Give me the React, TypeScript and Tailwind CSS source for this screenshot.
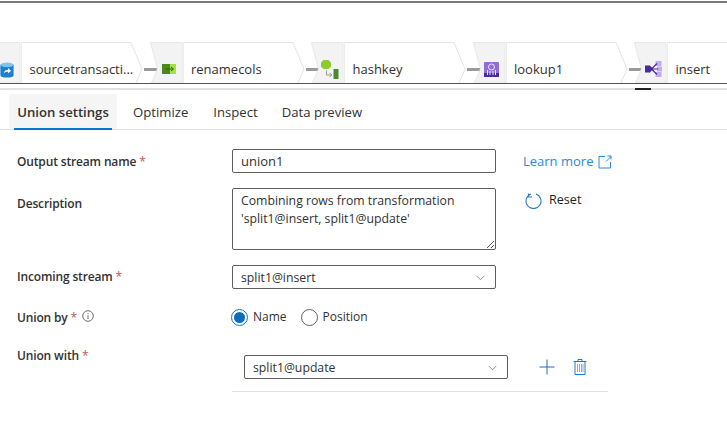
import React from 'react';
import { ChevronDown } from 'lucide-react';

const SourceIcon = () => (
  <svg width="14" height="16" viewBox="0 0 14 17">
    <path d="M0 3v11c0 1.6 3 2.6 7 2.6s7-1 7-2.6V3z" fill="#1c7fd0" />
    <ellipse cx="7" cy="3" rx="7" ry="2.4" fill="#7fc6ee" />
    <path d="M3.5 12.5c.3-3 2-4.3 4.7-4.3V6.4l3 2.9-3 2.9v-1.9c-1.9 0-3.4.4-4.7 1.7z" fill="#fff" />
  </svg>
);

const RenameIcon = () => (
  <svg width="14" height="10" viewBox="0 0 14 10">
    <rect width="8" height="10" fill="#4a8a1c" />
    <rect x="8" width="6" height="10" fill="#a4e04a" />
    <path d="M4 5h7M9 3l2.5 2L9 7" stroke="#2f5f10" strokeWidth="1" fill="none" />
  </svg>
);

const HashIcon = () => (
  <svg width="18" height="19" viewBox="0 0 18 19">
    <path d="M2.500 0h5l2.500 2.500v4L7.500 9h-5L0 6.500v-4z" fill="#8ccc2e" />
    <path d="M5.500 10.500v4.500h5M8.500 13l2.500 2-2.500 2" stroke="#9a9a9a" strokeWidth="1" fill="none" />
    <rect x="12.500" y="9" width="5" height="10" fill="#4a8a2c" />
  </svg>
);

const LookupIcon = () => (
  <svg width="15" height="15" viewBox="0 0 15 15">
    <rect width="15" height="15" rx="1" fill="#8f6bdc" />
    <rect y="11" width="15" height="4" fill="#4b2a9a" />
    <circle cx="7.500" cy="5" r="3" fill="none" stroke="#efe8ff" strokeWidth="1" />
    <path d="M3.500 13V8M6 13V9M9 13V9M11.500 13V8" stroke="#efe8ff" strokeWidth="1" />
  </svg>
);

const SplitIcon = () => (
  <svg width="17" height="16" viewBox="0 0 17 16">
    <rect x="10.500" y="0" width="6" height="5" fill="#c5a8f2" />
    <rect x="12" y="5.500" width="5" height="5" fill="#c5a8f2" />
    <rect x="10.500" y="11" width="6" height="5" fill="#c5a8f2" />
    <path d="M0 4.500h5L8 8l-3 3.500H0z" fill="#4b2a9a" />
    <path d="M7 7.500l5-5M7 8h6M7 8.500l5 5" stroke="#4b2a9a" strokeWidth="1.200" fill="none" />
  </svg>
);

const nodes = [
  { name: 'sourcetransacti...', icon: <SourceIcon />, cls: 'left-[12px] top-[20px]' },
  { name: 'renamecols', icon: <RenameIcon />, cls: 'left-[12px] top-[22px]' },
  { name: 'hashkey', icon: <HashIcon />, cls: 'left-[10px] top-[18px]' },
  { name: 'lookup1', icon: <LookupIcon />, cls: 'left-[11px] top-[20px]' },
  { name: 'insert', icon: <SplitIcon />, cls: 'left-[11px] top-[19px]' },
];

function PipelineNode({ name, icon, cls }: { name: string; icon: React.ReactNode; cls: string }) {
  return (
    <div className="relative h-[41px] w-[161.5px] shrink-0">
      <svg className="absolute left-0 top-0 overflow-visible" width="170" height="41">
        <path d="M0.500 0.500L7.500 27L1.500 41H32V0.500z" fill="#f3f3f3" stroke="#e8e8e8" />
        <path d="M33.500 0.500H143L154 27L148 41" fill="#fff" stroke="#e4e4e4" />
        <path d="M33.500 0.500V41" stroke="#ececec" fill="none" />
        <rect x="156" y="26" width="13" height="3" fill="#9a9a9a" />
      </svg>
      <div className={`absolute ${cls}`}>{icon}</div>
      <span className="absolute left-[41.500px] top-[18px] text-[13px] leading-[18px] text-[#323130]">{name}</span>
    </div>
  );
}

const Req = () => <span className="font-normal text-[#c4544f]"> *</span>;

export default function App() {
  return (
    <div className="h-[421px] w-[727px] overflow-hidden bg-white font-['Open_Sans',sans-serif] text-[12.25px] text-[#323130]">
      <div className="mt-px h-[2px] bg-[#7a7a7a]" />
      {/* Pipeline */}
      <div className="mt-[39px] h-[42px] overflow-hidden border-b border-[#555555]">
        <div className="-ml-[12px] flex">
          {nodes.map((n) => (
            <PipelineNode key={n.name} {...n} />
          ))}
        </div>
      </div>
      {/* scrollbar */}
      <div className="relative mt-[4px] h-[2px] bg-[#e1e1e1]">
        <div className="absolute left-[635px] top-0 h-[2px] w-[16px] bg-[#222222]" />
      </div>
      {/* Tabs */}
      <div className="mt-[4px] flex h-[36px] border-b border-[#e1e1e1] pl-[9px] text-[13.150px]">
        <div className="relative flex h-[35px] w-[108px] justify-center bg-[#f5f5f5] pt-[9px] font-semibold leading-[18px]">
          Union settings
          <div className="absolute bottom-[-1px] left-[5px] h-[2px] w-[98px] bg-[#0078d4]" />
        </div>
        <div className="ml-[16px] pt-[9px] leading-[18px]">Optimize</div>
        <div className="ml-[25px] pt-[9px] leading-[18px]">Inspect</div>
        <div className="ml-[24px] pt-[9px] leading-[18px]">Data preview</div>
      </div>
      {/* Form */}
      <div className="pl-[17px]">
        <div className="mt-[19px] flex">
          <label className="w-[215px] pt-[4px] text-[12px] font-semibold leading-[18px] tracking-[-0.15px]">Output stream name<Req /></label>
          <div className="flex h-[24px] w-[264px] items-center rounded-[2px] border border-[#605e5c] pl-[8px] pt-[1px] text-[13px]">union1</div>
          <a className="ml-[27px] flex items-center gap-[5px] pt-[1px] text-[13px] text-[#2b88d8]">
            Learn more
            <svg width="14" height="14" viewBox="0 0 14 14" fill="none" stroke="#2b88d8" strokeWidth="1">
              <path d="M7 1.500H1V13h11.500V7M8 6.500L13 1.500M9.500 1H13v3.500" />
            </svg>
          </a>
        </div>
        <div className="mt-[15px] flex">
          <label className="w-[215px] pt-[7px] text-[12px] font-semibold leading-[18px] tracking-[-0.15px]">Description</label>
          <div className="relative h-[62px] w-[264px] rounded-[2px] border border-[#605e5c] px-[8px] pt-[3px] leading-[18px]">
            Combining rows from transformation
            <br />
            'split1@insert, split1@update'
            <svg className="absolute bottom-[1px] right-[1px]" width="8" height="8" viewBox="0 0 8 8" stroke="#605e5c">
              <path d="M1 8L8 1M5 8L8 5" />
            </svg>
          </div>
          <button className="ml-[29px] flex h-[24px] items-center gap-[7px] pt-[1px] text-[12.600px] text-[#201f1e]">
            <svg width="17" height="17" viewBox="0 0 17 17" fill="none" stroke="#2b7cc8" strokeWidth="1.100">
              <path d="M6 1.500A7.500 7.500 0 1 0 11 1.500M3.500 1v3.500H7" transform="translate(0 0.500)" />
            </svg>
            Reset
          </button>
        </div>
        <div className="mt-[15px] flex">
          <label className="w-[215px] pt-[3px] text-[12px] font-semibold leading-[18px] tracking-[-0.15px]">Incoming stream<Req /></label>
          <div className="flex h-[24px] w-[264px] items-center justify-between rounded-[2px] border border-[#605e5c] pl-[8px] pr-[7px]">
            <span className="pt-[3px]">split1@insert</span>
            <ChevronDown className="h-[15px] w-[15px] pt-[1px] text-[#605e5c]" strokeWidth={1.200} />
          </div>
        </div>
        <div className="mt-[18px] flex items-center">
          <label className="flex w-[214px] items-center pt-[2px] text-[12px] font-semibold leading-[18px] tracking-[-0.15px]">
            <span>Union by<Req /></span>
            <svg className="mb-[4px] ml-[5px]" width="12" height="12" viewBox="0 0 12 12" fill="none" stroke="#605e5c" strokeWidth="0.900">
              <circle cx="6" cy="6" r="5.300" />
              <path d="M6 5.200V9M6 3v1" />
            </svg>
          </label>
          <div className="flex items-center text-[12px]">
            <span className="flex h-[17px] w-[17px] items-center justify-center rounded-full border border-[#0078d4]">
              <span className="h-[11px] w-[11px] rounded-full bg-[#0f6cbd]" />
            </span>
            <span className="ml-[5px]">Name</span>
            <span className="ml-[14px] h-[17px] w-[17px] rounded-full border border-[#605e5c]" />
            <span className="ml-[5px]">Position</span>
          </div>
        </div>
        <div className="mt-[19px] flex">
          <label className="w-[215px] pt-[1px] text-[12px] font-semibold leading-[18px] tracking-[-0.15px]">Union with<Req /></label>
          <div className="w-[376px] border-b border-[#e1e1e1] pb-[12px] pl-[12px] pt-[9px]">
            <div className="flex items-center">
              <div className="flex h-[24px] w-[264px] items-center justify-between rounded-[2px] border border-[#605e5c] pl-[8px] pr-[7px]">
                <span className="pt-[3px]">split1@update</span>
                <ChevronDown className="h-[15px] w-[15px] pt-[1px] text-[#605e5c]" strokeWidth={1.200} />
              </div>
              <svg className="ml-[31px]" width="16" height="16" viewBox="0 0 16 16" stroke="#1b6ec2" strokeWidth="1">
                <path d="M8 0.500V15.500M0.500 8H15.500" />
              </svg>
              <svg className="ml-[18px]" width="14" height="16" viewBox="0 0 14 16" fill="none" stroke="#1b7ccc">
                <path d="M0.500 2.500H13.500M2 2.500V15.500H12V2.500M5 2.500V0.500H9V2.500" />
                <path d="M4.500 5V13M6.500 5V13M8.500 5V13M10 5V13" stroke="#9aa6c8" />
              </svg>
            </div>
          </div>
        </div>
      </div>
    </div>
  );
}
